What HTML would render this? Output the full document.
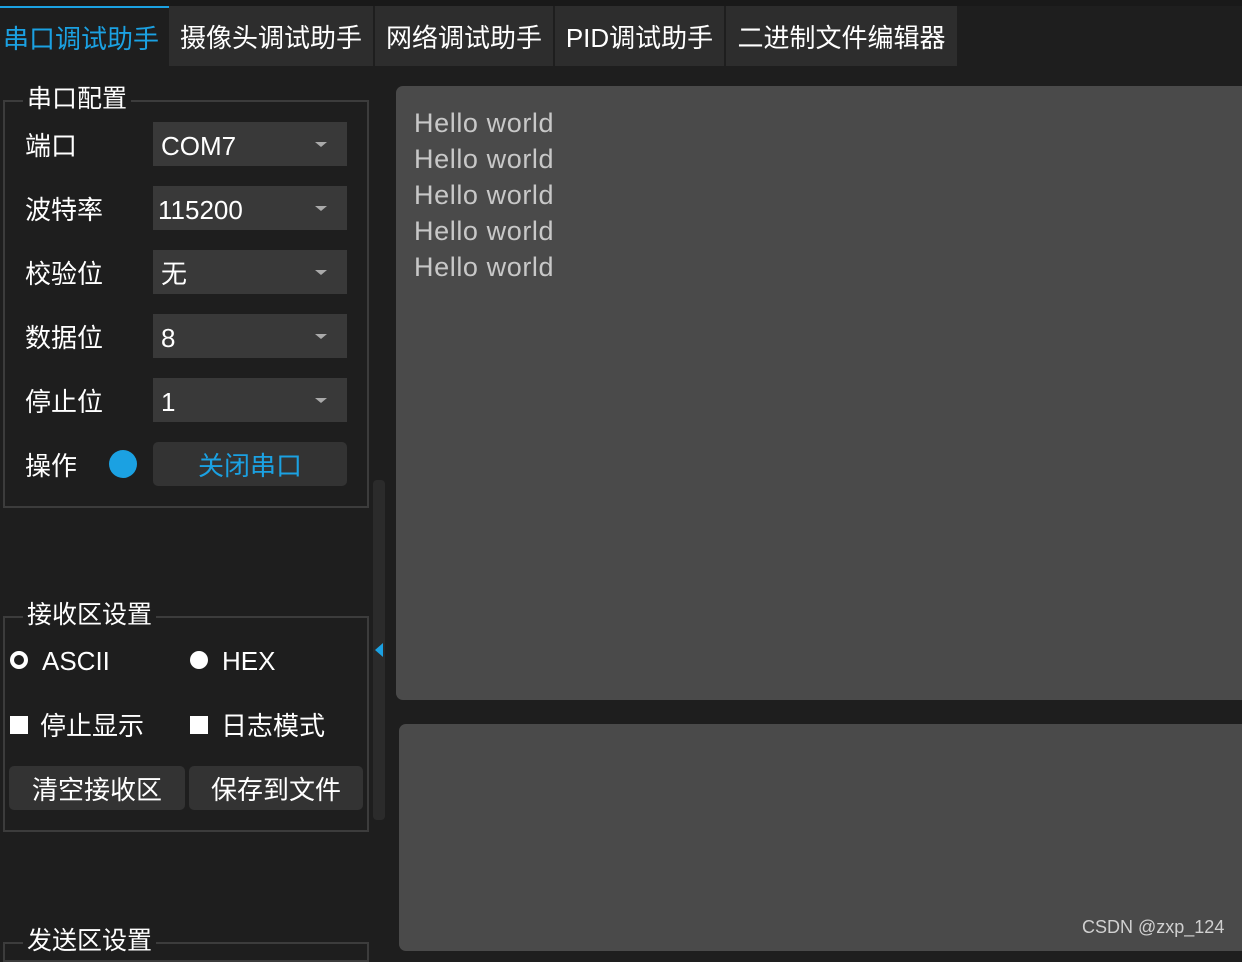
<!DOCTYPE html>
<html><head><meta charset="utf-8"><style>
*{margin:0;padding:0;box-sizing:border-box}
body{width:1242px;height:951px;background:#1e1e1e;overflow:hidden;position:relative;font-family:"Liberation Sans","Noto Sans CJK SC",sans-serif;color:#fff;font-size:26px}
.a{position:absolute}
.tabbar{left:0;top:0;width:1242px;height:6px;background:#191919}
.tab{top:6px;height:60px;background:#2d2d2d;line-height:64px;font-size:26px;text-align:center;white-space:nowrap}
.grp{border:2px solid #3c3c3c}
.gt{background:#1e1e1e;padding:0 4px;line-height:30px;font-size:25px}
.lbl{line-height:48px}
.cb{left:153px;width:194px;height:44px;background:#393939;line-height:48px;padding-left:8px;font-size:26px}
.cb:after{content:"";position:absolute;right:20px;top:20px;border-left:6px solid transparent;border-right:6px solid transparent;border-top:5px solid #aaa}
.btn{background:#333;border-radius:5px;text-align:center;line-height:48px}
.area{background:#4a4a4a;border-radius:7px 0 0 7px}
</style></head><body>
<div class="a tabbar"></div>
<div class="a tab" style="left:0;width:169px;background:#1e1e1e;color:#1ba1e2;border-top:2px solid #1ba1e2;line-height:62px;text-align:left;padding-left:3px">串口调试助手</div>
<div class="a tab" style="left:169px;width:204px">摄像头调试助手</div>
<div class="a tab" style="left:375px;width:178px">网络调试助手</div>
<div class="a tab" style="left:555px;width:169px">PID调试助手</div>
<div class="a tab" style="left:726px;width:231px">二进制文件编辑器</div>

<div class="a grp" style="left:3px;top:100px;width:366px;height:408px"></div>
<div class="a gt" style="left:23px;top:84px">串口配置</div>
<div class="a lbl" style="left:25px;top:122px">端口</div><div class="a cb" style="top:122px">COM7</div>
<div class="a lbl" style="left:25px;top:186px">波特率</div><div class="a cb" style="top:186px;padding-left:5px">115200</div>
<div class="a lbl" style="left:25px;top:250px">校验位</div><div class="a cb" style="top:250px">无</div>
<div class="a lbl" style="left:25px;top:314px">数据位</div><div class="a cb" style="top:314px">8</div>
<div class="a lbl" style="left:25px;top:378px">停止位</div><div class="a cb" style="top:378px">1</div>
<div class="a lbl" style="left:25px;top:442px">操作</div>
<div class="a" style="left:109px;top:450px;width:28px;height:28px;border-radius:50%;background:#1ba1e2"></div>
<div class="a btn" style="left:153px;top:442px;width:194px;height:44px;color:#1ba1e2">关闭串口</div>

<div class="a grp" style="left:3px;top:616px;width:366px;height:216px"></div>
<div class="a gt" style="left:23px;top:600px">接收区设置</div>
<div class="a" style="left:10px;top:651px;width:18px;height:18px;border-radius:50%;border:4px solid #fff"></div>
<div class="a lbl" style="left:42px;top:637px">ASCII</div>
<div class="a" style="left:190px;top:651px;width:18px;height:18px;border-radius:50%;background:#fff"></div>
<div class="a lbl" style="left:222px;top:637px">HEX</div>
<div class="a" style="left:10px;top:716px;width:18px;height:18px;background:#fff"></div>
<div class="a lbl" style="left:40px;top:702px">停止显示</div>
<div class="a" style="left:190px;top:716px;width:18px;height:18px;background:#fff"></div>
<div class="a lbl" style="left:221px;top:702px">日志模式</div>
<div class="a btn" style="left:9px;top:766px;width:176px;height:44px">清空接收区</div>
<div class="a btn" style="left:189px;top:766px;width:174px;height:44px">保存到文件</div>

<div class="a grp" style="left:3px;top:942px;width:366px;height:20px"></div>
<div class="a gt" style="left:23px;top:926px">发送区设置</div>

<div class="a" style="left:373px;top:480px;width:12px;height:340px;background:#2b2b2b;border-radius:4px"></div>
<div class="a" style="left:375px;top:643px;border-top:7px solid transparent;border-bottom:7px solid transparent;border-right:8px solid #1ba1e2"></div>

<div class="a area" style="left:396px;top:86px;width:846px;height:614px;padding:19px 0 0 18px;color:#c8c8c8;font-size:27px;letter-spacing:0.6px;line-height:36px">Hello world<br>Hello world<br>Hello world<br>Hello world<br>Hello world</div>
<div class="a area" style="left:399px;top:724px;width:843px;height:227px"></div>
<div class="a" style="left:1082px;top:917px;font-size:18px;color:#d0d0d0">CSDN @zxp_124</div>
</body></html>
